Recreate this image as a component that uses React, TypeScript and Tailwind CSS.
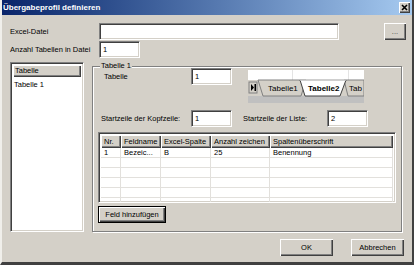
const sunken =
  'border border-t-[#808080] border-l-[#808080] border-b-white border-r-white shadow-[inset_1px_1px_0_#404040,inset_-1px_-1px_0_#d4d0c8] bg-white';
const raised =
  'bg-[#d4d0c8] shadow-[inset_1px_1px_0_#ffffff,inset_-1px_-1px_0_#404040,inset_-2px_-2px_0_#808080]';

function TextBox({ value, className }: { value?: string; className: string }) {
  return (
    <div className={`${sunken} h-[17px] pl-[3px] flex items-center ${className}`}>
      {value}
    </div>
  );
}

function TabStrip() {
  return (
    <svg width="116" height="33" viewBox="0 0 116 33" className="mt-[2px] shrink-0">
      <rect x="0" y="0" width="116" height="10" fill="#ffffff" />
      <line x1="44.5" y1="0" x2="44.5" y2="10" stroke="#e4e4e4" />
      <line x1="100.5" y1="0" x2="100.5" y2="10" stroke="#e4e4e4" />
      <rect x="0" y="10" width="116" height="16" fill="#d4d0c8" />
      <rect x="0" y="26" width="116" height="7" fill="#c0c0c0" />
      {/* nav button */}
      <rect x="1" y="12" width="8" height="11" fill="#d4d0c8" stroke="#808080" />
      <path d="M3 14 L6 17.5 L3 21 Z" fill="#000" />
      <rect x="6.5" y="14" width="1.5" height="7" fill="#000" />
      {/* tab 3 (behind) */}
      <path d="M96 10 L116 10 L116 26 L100 26 Z" fill="#d4d0c8" stroke="#808080" />
      <text x="101" y="21" fontSize="8" fontFamily="Liberation Sans, Arial, sans-serif" fill="#000">
        Tab
      </text>
      {/* tab 1 */}
      <path d="M10 10 L58 10 L53 26 L15 26 Z" fill="#d4d0c8" stroke="#808080" />
      <text x="20" y="21" fontSize="8" fontFamily="Liberation Sans, Arial, sans-serif" fill="#000">
        Tabelle1
      </text>
      {/* active tab 2 */}
      <path d="M52 10 L98 10 L92 26 L57 26 Z" fill="#ffffff" stroke="#404040" />
      <line x1="52" y1="10" x2="98" y2="10" stroke="#ffffff" />
      <text
        x="60"
        y="21"
        fontSize="8"
        fontWeight="bold"
        fontFamily="Liberation Sans, Arial, sans-serif"
        fill="#000"
      >
        Tabelle2
      </text>
    </svg>
  );
}

const cols = [
  { name: 'Nr.', w: 'w-[20px]' },
  { name: 'Feldname', w: 'w-[40px]' },
  { name: 'Excel-Spalte', w: 'w-[50px]' },
  { name: 'Anzahl zeichen', w: 'w-[59px]' },
  { name: 'Spaltenüberschrift', w: 'flex-1' },
];

const rows = [
  ['1', 'Bezeic...', 'B', '25', 'Benennung'],
  ['', '', '', '', ''],
  ['', '', '', '', ''],
  ['', '', '', '', ''],
  ['', '', '', '', ''],
  ['', '', '', '', ''],
];

function FieldTable() {
  return (
    <div className={`${sunken} w-[298px] h-[71px] mt-[5px] ml-[5px] p-[2px] overflow-hidden`}>
      <div className="flex h-[13px]">
        {cols.map((c) => (
          <div
            key={c.name}
            className={`${c.w} ${raised} shrink-0 px-[3px] flex items-center whitespace-nowrap overflow-hidden`}
          >
            {c.name}
          </div>
        ))}
      </div>
      {rows.map((r, i) => (
        <div key={i} className="flex h-[10px]">
          {r.map((cell, j) => (
            <div
              key={j}
              className={`${cols[j].w} shrink-0 border-r border-b border-[#e2e0dc] px-[3px] flex items-center whitespace-nowrap overflow-hidden`}
            >
              {cell}
            </div>
          ))}
        </div>
      ))}
    </div>
  );
}

export default function App() {
  return (
    <div className="w-[414px] h-[265px] bg-[#d4d0c8] flex flex-col text-[7.5px] leading-none text-black font-['Liberation_Sans',Arial,sans-serif] border-l-2 border-l-[#f0efeb] border-r-2 border-r-[#404040] border-b-[3px] border-b-[#404040] overflow-hidden">
      {/* title bar */}
      <div className="h-[15px] shrink-0 flex items-center justify-between pl-[1px] pr-[2px] bg-gradient-to-r from-[#0a246a] to-[#a6caf0]">
        <span className="text-white font-bold text-[8px]">Übergabeprofil definieren</span>
        <div className={`${raised} w-[11px] h-[11px] flex items-center justify-center`}>
          <svg width="7" height="7" viewBox="0 0 7 7">
            <path d="M1 1 L6 6 M6 1 L1 6" stroke="#000" strokeWidth="1.6" />
          </svg>
        </div>
      </div>

      <div className="flex flex-col pl-[8px]">
        {/* Excel-Datei */}
        <div className="flex items-center mt-[8px] h-[17px]">
          <span className="w-[89px] shrink-0">Excel-Datei</span>
          <TextBox className="w-[240px]" />
          <div className={`${raised} w-[22px] h-[17px] ml-[45px] flex items-center justify-center text-[#404040]`}>
            ...
          </div>
        </div>
        {/* Anzahl */}
        <div className="flex items-center mt-[1px] h-[17px]">
          <span className="w-[89px] shrink-0">Anzahl Tabellen in Datei</span>
          <TextBox value="1" className="w-[41px]" />
        </div>

        {/* main area */}
        <div className="flex mt-[4px]">
          <div className={`${sunken} w-[74px] h-[170px] p-[2px] flex flex-col`}>
            <div className={`${raised} h-[12px] pl-[2px] flex items-center`}>Tabelle</div>
            <div className="pl-[1px] mt-[4px]">Tabelle 1</div>
          </div>

          <div className="relative w-[310px] h-[166px] mt-[4px] ml-[8px] border border-[#808080] shadow-[inset_1px_1px_0_#ffffff,1px_1px_0_#ffffff] flex flex-col">
            <span className="absolute left-[7px] -top-[5px] bg-[#d4d0c8] px-[1px]">Tabelle 1</span>
            <div className="flex items-start mt-[1px] h-[35px]">
              <div className="w-[98px] pl-[11px] h-[17px] flex items-center shrink-0">Tabelle</div>
              <TextBox value="1" className="w-[41px]" />
              <div className="ml-[16px]">
                <TabStrip />
              </div>
            </div>
            <div className="flex items-center mt-[7px] h-[17px]">
              <div className="w-[98px] pl-[8px] shrink-0">Startzeile der Kopfzeile:</div>
              <TextBox value="1" className="w-[41px]" />
              <div className="w-[84px] ml-[11px] shrink-0">Startzeile der Liste:</div>
              <TextBox value="2" className="w-[41px]" />
            </div>
            <FieldTable />
            <div className="ml-[5px] mt-[3px] w-[68px] h-[17px] border border-black">
              <div className={`${raised} w-full h-full flex items-center justify-center`}>Feld hinzufügen</div>
            </div>
          </div>
        </div>

        {/* buttons */}
        <div className="flex justify-end mt-[7px] pr-[8px] gap-[18px]">
          <div className={`${raised} w-[53px] h-[17px] flex items-center justify-center`}>OK</div>
          <div className={`${raised} w-[53px] h-[17px] flex items-center justify-center`}>Abbrechen</div>
        </div>
      </div>
    </div>
  );
}
